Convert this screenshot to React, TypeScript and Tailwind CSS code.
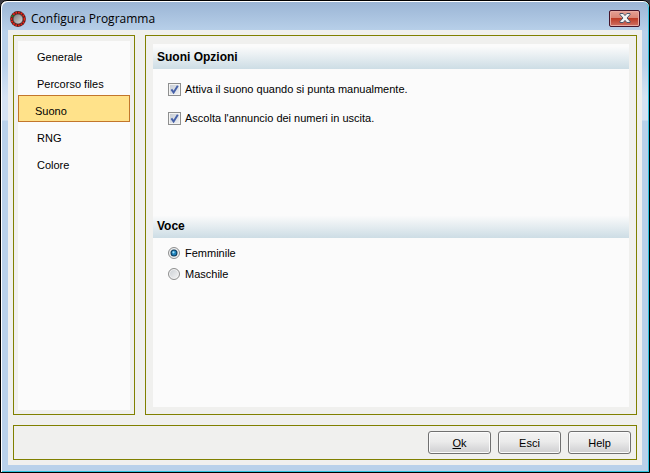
import clsx from "clsx";
import { useState } from "react";

const pages = ["Generale", "Percorso files", "Suono", "RNG", "Colore"];

const voices = ["Femminile", "Maschile"];

const AppIcon = () => (
  <svg width="16" height="16" viewBox="0 0 16 16" aria-hidden="true">
    <defs>
      <linearGradient id="wheel" x1="0" y1="0" x2="1" y2="1">
        <stop offset="0" stopColor="#777" />
        <stop offset="1" stopColor="#dcdcdc" />
      </linearGradient>
    </defs>
    <circle cx="8" cy="8" r="7.9" fill="#4d2020" />
    <circle
      cx="8"
      cy="8"
      r="6.4"
      fill="none"
      stroke="#ee2418"
      strokeWidth="1.8"
      strokeDasharray="1.7 0.98"
    />
    <circle cx="8" cy="8" r="4.9" fill="url(#wheel)" stroke="#3c2a2a" strokeWidth="0.5" />
    <rect x="1.5" y="4" width="2" height="2" fill="#1c7a2c" />
  </svg>
);

const CloseIcon = () => (
  <svg width="12" height="10" viewBox="0 0 12 10" aria-hidden="true">
    <path
      d="M1 .5h3.2L6 2.6 7.8.5H11v1.2L8 5l3 3.3v1.2H7.8L6 7.4 4.2 9.5H1V8.3L4 5 1 1.7z"
      fill="#f4f4f4"
      stroke="#4b5568"
      strokeWidth="1"
    />
  </svg>
);

const SectionHeader = ({ title }: { title: string }) => (
  <h2 className="h-[25px] bg-linear-to-b from-[#fbfbfb] from-10% to-[#cddde5] pl-1 text-xs leading-[26px] font-bold">
    {title}
  </h2>
);

const CheckOption = ({ label }: { label: string }) => (
  <label className="flex items-center gap-1">
    <span className="grid size-[13px]">
      <input
        type="checkbox"
        defaultChecked
        className="peer col-start-1 row-start-1 size-[13px] appearance-none border border-[#8e8f8f] bg-linear-to-br from-[#c3c9d1] to-[#f4f5f6] shadow-[inset_0_0_0_1px_#f4f4f4]"
      />
      <svg
        viewBox="0 0 13 13"
        aria-hidden="true"
        className="pointer-events-none invisible col-start-1 row-start-1 size-[13px] peer-checked:visible"
      >
        <path
          d="M3.4 6.4 5.6 9.6 9.8 2.8"
          fill="none"
          stroke="#4560a8"
          strokeWidth="1.9"
        />
      </svg>
    </span>
    {label}
  </label>
);

const VoiceOption = ({
  label,
  checked,
  onSelect,
}: {
  label: string;
  checked: boolean;
  onSelect: () => void;
}) => (
  <label className="flex items-center gap-[5px]">
    <span className="grid size-3">
      <input
        type="radio"
        name="voice"
        checked={checked}
        onChange={onSelect}
        className="peer col-start-1 row-start-1 size-3 appearance-none rounded-full border border-[#8e8f8f] bg-linear-to-br from-[#c9ced3] to-[#f6f6f6] shadow-[inset_0_0_0_1px_#f4f4f4]"
      />
      <svg
        viewBox="0 0 12 12"
        aria-hidden="true"
        className="pointer-events-none invisible col-start-1 row-start-1 size-3 peer-checked:visible"
      >
        <circle cx="6" cy="6" r="3.5" fill="#12405f" />
        <circle cx="6" cy="6" r="2.4" fill="#1f83bd" />
        <circle cx="5.5" cy="5.3" r="1.1" fill="#a5e2fa" />
      </svg>
    </span>
    {label}
  </label>
);

const FooterButton = ({ children }: { children: React.ReactNode }) => (
  <button
    type="button"
    className="h-[23px] w-[63px] rounded-[3px] border border-[#707070] bg-linear-to-b from-[#f3f3f3] via-[#ebebeb] via-45% to-[#cfcfd1] shadow-[inset_0_0_0_1px_#fbfbfb]"
  >
    {children}
  </button>
);

const App = () => {
  const [page, setPage] = useState("Suono");
  const [voice, setVoice] = useState("Femminile");

  return (
    <div className="flex min-h-screen bg-[#3a3a42] font-['Liberation_Sans',Arial,sans-serif] text-[11px] leading-4 text-black">
      <div className="flex flex-1 flex-col rounded-t-[7px] border border-black bg-white pt-px pl-px">
        <div className="flex flex-1 flex-col rounded-t-md border-r border-b border-[#2fc1dc] bg-[linear-gradient(to_bottom,#9bb5d5_0px,#b9d1ea_30px,#b9d1ea_62px,#d6e3f3_95px,#d6e3f3_118px,#b9d1ea_119px)] px-1.5 pb-1.5">
          <header className="flex h-7 items-center gap-1 pt-1">
            <div className="pt-0.5 pl-0.5">
              <AppIcon />
            </div>
            <h1 className="flex-1 pt-0.5 pl-px font-['Open_Sans','Noto_Sans',sans-serif] text-xs">
              Configura Programma
            </h1>
            <button
              type="button"
              aria-label="Chiudi"
              className="mr-0.5 flex h-[17px] w-[31px] items-center justify-center rounded-[2px] border border-[#45152a] bg-[linear-gradient(to_bottom,#e5a094,#d98575_47%,#bd3c26_50%,#cf7164)] shadow-[inset_0_0_0_1px_#e8aaa0]"
            >
              <CloseIcon />
            </button>
          </header>

          <main className="flex flex-1 flex-col gap-2.5 bg-[#f0f0ee] p-[5px]">
            <div className="flex flex-1 gap-2.5">
              <nav className="flex w-[122px] border border-[#808000] px-1 pt-[5px] pb-1">
                <ul className="flex-1 bg-[#fbfbfb]">
                  {pages.map((item) => (
                    <li key={item}>
                      <button
                        type="button"
                        onClick={() => setPage(item)}
                        className={clsx(
                          "h-[27px] w-full border pt-1 text-left",
                          item === page
                            ? "border-[#c2762b] bg-[#ffe28a] pl-4"
                            : "border-transparent pl-[18px]"
                        )}
                      >
                        {item}
                      </button>
                    </li>
                  ))}
                </ul>
              </nav>

              <section className="flex flex-1 border border-[#808000] px-[7px] pt-2 pb-[7px]">
                <div className="flex-1 bg-[#fbfbfb]">
                  <SectionHeader title="Suoni Opzioni" />
                  <div className="flex h-36 flex-col gap-[13px] px-[15px] pt-3">
                    <CheckOption label="Attiva il suono quando si punta manualmente." />
                    <CheckOption label="Ascolta l'annuncio dei numeri in uscita." />
                  </div>

                  <SectionHeader title="Voce" />
                  <div className="flex flex-col gap-[5px] px-[15px] pt-[7px]">
                    {voices.map((item) => (
                      <VoiceOption
                        key={item}
                        label={item}
                        checked={item === voice}
                        onSelect={() => setVoice(item)}
                      />
                    ))}
                  </div>
                </div>
              </section>
            </div>

            <footer className="flex justify-end gap-[7px] border border-[#808000] p-[5px]">
              <FooterButton>
                <span className="underline">O</span>k
              </FooterButton>
              <FooterButton>Esci</FooterButton>
              <FooterButton>Help</FooterButton>
            </footer>
          </main>
        </div>
      </div>
    </div>
  );
};

export default App;
